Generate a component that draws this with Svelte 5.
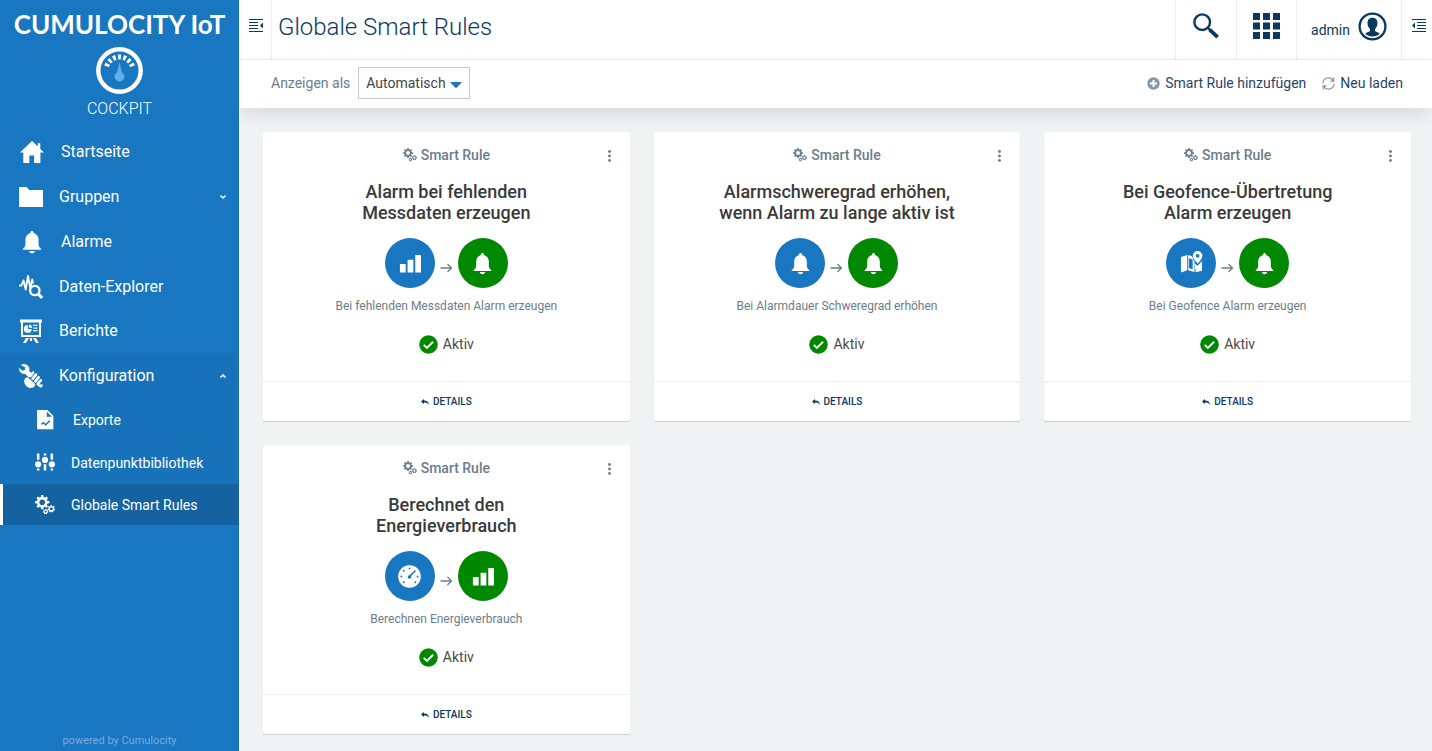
<script>
  const nav = [
    { label: 'Startseite', icon: 'home', large: true },
    { label: 'Gruppen', icon: 'folder', caret: 'down' },
    { label: 'Alarme', icon: 'bell', large: true },
    { label: 'Daten-Explorer', icon: 'explorer' },
    { label: 'Berichte', icon: 'report', compact: true }
  ];

  const subnav = [
    { label: 'Exporte', icon: 'export', large: true },
    { label: 'Datenpunktbibliothek', icon: 'sliders' },
    { label: 'Globale Smart Rules', icon: 'gears', active: true }
  ];

  const rules = [
    { title: ['Alarm bei fehlenden', 'Messdaten erzeugen'], from: 'bars', to: 'bell', text: 'Bei fehlenden Messdaten Alarm erzeugen' },
    { title: ['Alarmschweregrad erhöhen,', 'wenn Alarm zu lange aktiv ist'], from: 'bell', to: 'bell', text: 'Bei Alarmdauer Schweregrad erhöhen' },
    { title: ['Bei Geofence-Übertretung', 'Alarm erzeugen'], from: 'map', to: 'bell', text: 'Bei Geofence Alarm erzeugen' },
    { title: ['Berechnet den', 'Energieverbrauch'], from: 'gauge', to: 'bars', text: 'Berechnen Energieverbrauch' }
  ];

  let view = $state('Automatisch');

  // Outline of a toothed wheel with a round hole.
  function gear(cx, cy, outer, inner, hole, teeth) {
    const step = (Math.PI * 2) / teeth;
    const at = (r, a) => `${(cx + r * Math.cos(a)).toFixed(2)} ${(cy + r * Math.sin(a)).toFixed(2)}`;
    const pts = [];
    for (let i = 0; i < teeth; i++) {
      const a = i * step - Math.PI / 2;
      pts.push(at(inner, a - step * 0.3), at(outer, a - step * 0.2), at(outer, a + step * 0.2), at(inner, a + step * 0.3));
    }
    return `M${pts.join('L')}ZM${cx - hole} ${cy}a${hole} ${hole} 0 1 0 ${hole * 2} 0a${hole} ${hole} 0 1 0 ${-hole * 2} 0Z`;
  }

  const gears = gear(7.2, 7.2, 7.2, 5.4, 2.8, 8) + gear(16.3, 13.8, 3.8, 2.9, 1.5, 7) + gear(10.6, 16.6, 2.7, 2.1, 1, 7);
  const ticks = [-66, -44, -22, 0, 22, 44, 66];
</script>

{#snippet icon(name, size)}
  <svg class="icon" width={size} height={size} viewBox="0 0 24 24" fill="currentColor" aria-hidden="true">
    {#if name === 'home'}
      <path d="M12 1 0 12.6h3.3V23h6v-7.6h4.8V23h6.3V12.6H24L20.3 9V3.2h-2.6v3.2z" />
    {:else if name === 'folder'}
      <path d="M0 2h7.6l2.8 3H24v17H0z" />
    {:else if name === 'bell'}
      <path d="M12 1c.9 0 1.6.7 1.6 1.6v.5c3 .8 5 3.400 5 6.600v4.600c0 2 .8 3 2.600 4.700v.7H2.800V19c1.800-1.700 2.600-2.700 2.600-4.700V9.700c0-3.200 2-5.800 5-6.600v-.5C10.400 1.700 11.100 1 12 1zM9.200 20.900h5.600c-.2 1.400-1.300 2.300-2.800 2.300s-2.600-.9-2.800-2.300z" />
    {:else if name === 'explorer'}
      <path d="M0 10.500h2.400L4.500 5.500l2.200 9L9 1l2.300 12L13.200 4.500l1 4" fill="none" stroke="currentColor" stroke-width="1.900" stroke-linejoin="round" />
      <circle cx="15.800" cy="15.500" r="4.700" fill="none" stroke="currentColor" stroke-width="2.300" />
      <path d="m19.200 18.900 4 4" stroke="currentColor" stroke-width="3" />
    {:else if name === 'report'}
      <path fill-rule="evenodd" d="M1 .5h22v3h-1V18H2V3.500H1zM4 3.500V16h16V3.500z" />
      <path d="M8.800 6v3.900h3.900A3.900 3.900 0 1 1 8.800 6z" />
      <path d="M9.900 5.500a3.600 3.600 0 0 1 3.400 3.300H9.900zM14 5.800h4.500v1.300H14zM14.500 8.400h4v1.300h-4zM14 11h4.500v1.300H14zM7 19h3l-3 5H4zM17 19h-3l3 5h3zM10.900 19h2.200v3h-2.200z" />
    {:else if name === 'wrench'}
      <path d="M1.800 1C4.500-.6 8 0 9.600 2.600c.9 1.400 1 2.900.5 4.300l3 3-3.400 3.600-3.400-3.600c-2.200.4-4.500-.6-5.600-2.700C.1 6.100 0 4.900.3 3.800l3 2.900 2.400-.6.700-2.500z" />
      <path d="M14 8.600 11.400 12M17 10.600 13.700 14.700M19.700 13.200 16.300 17.300M21.800 16.300 19 19.600" fill="none" stroke="currentColor" stroke-width="2.700" stroke-linecap="round" />
      <path d="M20.200 20.200l3.300.3c.8.900-.4 3.200-2 3.300l-4.300-3.300 1.600-1z" />
      <path d="M5.600 15c.8-1.300 2.700-2 4-1l6.500 6c.3 1.400-.7 3-2.300 3.600-1.900.7-4 .5-5.300-.6-2.500-1.900-4-4.800-2.900-8z" />
    {:else if name === 'export'}
      <path fill-rule="evenodd" d="M2.500 0H15l7 7.200V23H2.500zM14.200 2v6h6zM7 16.500l3.200-2.500 2.600 2.500 4.500-4.200 1.200 1.300-5.700 5.300-2.800-2.600-2 1.600z" />
    {:else if name === 'sliders'}
      <path d="M2.300 .5h3v7.500h-3zM2.300 18.500h3v2.500h-3zM10.500 .5h3v2.500h-3zM10.500 13.500h3v7.500h-3zM18.700 .5h3v7.500h-3zM18.700 18.500h3v2.500h-3z" />
      <circle cx="3.800" cy="13.500" r="3.700" /><circle cx="12" cy="8.300" r="3.700" /><circle cx="20.200" cy="13.500" r="3.700" />
    {:else if name === 'gears'}
      <path d={gears} transform="scale(1.200)" fill-rule="evenodd" />
    {:else if name === 'bars'}
      <path d="M2 12.500h6v9H2zM10 8h6v13.500h-6zM18 3h6v18.500h-6z" />
    {:else if name === 'map'}
      <path d="M1 5.300 7.500 3v16L1 21.500zM8.500 3l4.300 1.500c.2 2 1.400 4.200 2.300 5.500v10.800L8.500 19z" fill-opacity="1" />
      <path fill-rule="evenodd" d="M18.400 -1a5 5 0 0 1 5 5c0 3-3.200 6-5 8.300C16.600 10 13.400 7 13.400 4a5 5 0 0 1 5-5zM18.400 2a2 2 0 1 0 0 4 2 2 0 0 0 0-4z" />
      <path d="M15 12l3.400 2.400 4.600-5v10.100L16.500 21z" />
      <path d="M9.200 6.500l4 1.400v10.300l-4-1.400z" class="cut" />
    {:else if name === 'gauge'}
      <circle cx="12" cy="12" r="11.800" />
      <g class="cut">
        <circle cx="12" cy="3.500" r="1" /><circle cx="6" cy="6" r="1" /><circle cx="3.500" cy="12" r="1" /><circle cx="6" cy="18" r="1" />
        <circle cx="18" cy="18" r="1" /><circle cx="20.500" cy="12" r="1" /><circle cx="12" cy="12.500" r="1.900" />
        <path d="m11.200 11.600 6.600-6.400 1 1-6.400 6.600z" />
      </g>
    {/if}
  </svg>
{/snippet}

<div class="app">
  <aside class="sidebar">
    <div class="brand">
      <div class="logo">CUMULOCITY IoT</div>
      <svg class="emblem" width="47" height="47" viewBox="0 0 47 47" aria-hidden="true">
        <circle cx="23.500" cy="23.500" r="21.200" fill="none" stroke="#fff" stroke-width="4.400" />
        {#each ticks as angle}
          <path d="M21.900 7.500h3.200l-.4 5h-2.400z" fill="#fff" transform="rotate({angle} 23.500 23.500)" />
        {/each}
        <path d="M23.500 15l2.300 10.200a4.900 4.900 0 1 1-4.600 0z" fill="#61aeea" />
      </svg>
      <div class="product">COCKPIT</div>
    </div>

    <nav>
      {#each nav as item}
        <a href="#{item.icon}" class="item" class:compact={item.compact}>
          <span class="slot" class:large={item.large}>{@render icon(item.icon, 24)}</span>
          <span>{item.label}</span>
          {#if item.caret}
            <svg class="caret" width="8" height="8" viewBox="0 0 8 8" aria-hidden="true"><path d="m1.500 2.500 2.500 2.500 2.500-2.500" /></svg>
          {/if}
        </a>
      {/each}
      <div class="group">
        <a href="#konfiguration" class="item compact">
          <span class="slot">{@render icon('wrench', 24)}</span>
          <span>Konfiguration</span>
          <svg class="caret" width="8" height="8" viewBox="0 0 8 8" aria-hidden="true"><path d="m1.500 5.500 2.500-2.500 2.500 2.500" /></svg>
        </a>
        {#each subnav as item}
          <a href="#{item.icon}" class="sub" class:active={item.active}>
            <span class="slot" class:large={item.large}>{@render icon(item.icon, 20)}</span>
            <span>{item.label}</span>
          </a>
        {/each}
      </div>
    </nav>

    <div class="powered">powered by Cumulocity</div>
  </aside>

  <div class="main">
    <header class="top">
      <button class="cell toggle" aria-label="Navigator">
        <svg width="14" height="13" viewBox="0 0 14 13" aria-hidden="true">
          <path d="M0 .5h14M0 3.500h9M0 6.500h9M0 9.500h9M0 12.500h14" stroke="currentColor" />
          <path d="M14 3.500v6l-3-3z" fill="currentColor" />
        </svg>
      </button>
      <h1>Globale Smart Rules</h1>
      <button class="cell search" aria-label="Suche">
        <svg width="28" height="28" viewBox="0 0 28 28" fill="none" stroke="currentColor" aria-hidden="true">
          <circle cx="10.200" cy="10.200" r="7.800" stroke-width="2.400" />
          <path d="m15.500 15.500 3 3" stroke-width="2.400" /><path d="m17.600 17.600 8 7.600" stroke-width="3.800" />
        </svg>
      </button>
      <button class="cell apps" aria-label="Anwendungen">
        <svg width="27" height="27" viewBox="0 0 27 27" fill="currentColor" aria-hidden="true">
          {#each [0, 9.5, 19] as y}{#each [0, 10, 20] as x}<rect {x} {y} width="7" height="7" />{/each}{/each}
        </svg>
      </button>
      <button class="cell user">
        <span>admin</span>
        <svg width="29" height="29" viewBox="0 0 29 29" aria-hidden="true">
          <circle cx="14.500" cy="14.500" r="12.900" fill="none" stroke="currentColor" stroke-width="2.300" />
          <path d="M14.500 5.800c3.300 0 5 2.200 5 5.300 0 2.600-1.100 4.500-2.400 5.800v1.800c0 1.300 3.700 1.300 4.600 3.100-1.700 1.700-4.300 2.800-7.200 2.800s-5.500-1.100-7.200-2.800c.9-1.800 4.600-1.800 4.600-3.100v-1.800c-1.300-1.300-2.400-3.200-2.400-5.800 0-3.100 1.700-5.300 5-5.300z" fill="currentColor" />
        </svg>
      </button>
      <button class="cell drawer" aria-label="Seitenleiste">
        <svg width="14" height="13" viewBox="0 0 14 13" aria-hidden="true">
          <path d="M0 .5h14M5 3.500h9M5 6.500h9M5 9.500h9M0 12.500h14" stroke="currentColor" />
          <path d="M3 3.500v6l-3-3z" fill="currentColor" />
        </svg>
      </button>
    </header>

    <div class="toolbar">
      <label for="view">Anzeigen als</label>
      <div class="select">
        <select id="view" bind:value={view}>
          <option>Automatisch</option>
          <option>Liste</option>
        </select>
        <svg width="12" height="6" viewBox="0 0 12 6" aria-hidden="true"><path d="M0 0h12L7 5.400q-1 .9-2 0z" fill="#1776bf" /></svg>
      </div>
      <div class="actions">
        <button>
          <svg width="13" height="13" viewBox="0 0 13 13" aria-hidden="true">
            <circle cx="6.500" cy="6.500" r="6.200" fill="#8399a9" /><path d="M6.500 3v7M3 6.500h7" stroke="#fff" stroke-width="2" />
          </svg>
          Smart Rule hinzufügen
        </button>
        <button>
          <svg width="13" height="13" viewBox="0 0 13 13" fill="none" stroke="#8399a9" stroke-width="1.200" aria-hidden="true">
            <path d="M1 6.300A5.400 5.400 0 0 1 11.200 3.800M12 6.700A5.400 5.400 0 0 1 1.800 9.200M11.800 .6v3.500H8.400M1.200 12.400V8.900h3.400" />
          </svg>
          Neu laden
        </button>
      </div>
    </div>

    <main class="grid">
      {#each rules as rule}
        <article class="card">
          <div class="kind">
            {@render icon('gears', 14)}
            <span>Smart Rule</span>
            <button class="more" aria-label="Menü">
              <svg width="3" height="12" viewBox="0 0 3 12" fill="currentColor" aria-hidden="true"><circle cx="1.500" cy="1.500" r="1.400" /><circle cx="1.500" cy="6" r="1.400" /><circle cx="1.500" cy="10.500" r="1.400" /></svg>
            </button>
          </div>
          <h2>{rule.title[0]}<br />{rule.title[1]}</h2>
          <div class="flow">
            <span class="disc source">{@render icon(rule.from, 23)}</span>
            <svg class="arrow" width="13" height="10" viewBox="0 0 13 10" fill="none" stroke="currentColor" stroke-width="1.300" aria-hidden="true"><path d="M0.500 5h11M7.500 1l4 4-4 4" /></svg>
            <span class="disc target">{@render icon(rule.to, 23)}</span>
          </div>
          <p>{rule.text}</p>
          <div class="status">
            <svg width="19" height="19" viewBox="0 0 19 19" aria-hidden="true">
              <circle cx="9.500" cy="9.500" r="9.300" fill="#080" /><path d="m4.800 9.900 3.100 3 6.200-6.200" fill="none" stroke="#fff" stroke-width="2" />
            </svg>
            Aktiv
          </div>
          <a class="details" href="#details">
            <svg width="8" height="6" viewBox="0 0 8 6" fill="currentColor" aria-hidden="true"><path d="M0 2.400 3 0v1.400c3 0 4.800 1.400 5 4.600C7 4 5.500 3.500 3 3.500v1.400z" /></svg>
            DETAILS
          </a>
        </article>
      {/each}
    </main>
  </div>
</div>

<style>
  :global(body) {
    margin: 0;
    background: #f1f2f4;
  }
  .app {
    display: flex;
    min-height: 100vh;
    font: 14px/20px Roboto, sans-serif;
    color: #4a4a4a;
  }
  .app * {
    box-sizing: border-box;
  }
  svg {
    display: block;
    flex: none;
    overflow: visible;
  }
  button {
    border: 0;
    padding: 0;
    background: none;
    font: inherit;
    color: inherit;
    cursor: pointer;
  }
  a {
    color: inherit;
    text-decoration: none;
  }

  .sidebar {
    position: relative;
    z-index: 1;
    display: flex;
    flex: none;
    flex-direction: column;
    width: 239px;
    background: #1976c1;
    color: #fff;
  }
  .brand {
    display: flex;
    flex-direction: column;
    align-items: center;
    height: 129px;
    padding-top: 8px;
  }
  .logo {
    font: 700 26px/32px Lato, sans-serif;
    white-space: nowrap;
  }
  .emblem {
    margin-top: 7px;
  }
  .product {
    margin-top: 5px;
    font-size: 16px;
    font-weight: 300;
  }
  .item,
  .sub {
    display: flex;
    align-items: center;
    height: 45px;
    padding: 0 12px 0 19px;
    font-size: 16px;
  }
  .item.compact {
    height: 44px;
  }
  .slot {
    display: flex;
    width: 40px;
  }
  .slot.large {
    width: 42px;
  }
  .item .slot.large {
    padding-left: 1px;
  }
  .caret {
    margin-left: auto;
    fill: none;
    stroke: #fff;
    stroke-width: 1.5;
  }
  .group {
    background: #1872b9;
    border-top: 1px solid #176eb3;
  }
  .sub {
    height: 43px;
    padding-left: 35px;
    font-size: 14px;
  }
  .sub .slot {
    width: 36px;
  }
  .sub .slot.large {
    width: 38px;
  }
  .sub.active {
    height: 41px;
    padding-left: 32px;
    border-left: 3px solid #fff;
    background: #1562a0;
  }
  .powered {
    margin-top: auto;
    text-align: center;
    font-size: 11px;
    color: #75ade0;
  }

  .main {
    display: flex;
    flex: 1;
    flex-direction: column;
    min-width: 0;
  }
  .top {
    display: flex;
    height: 60px;
    background: #fff;
    border-bottom: 1px solid #ebedee;
    color: #0b385f;
  }
  h1 {
    flex: 1;
    margin: 0;
    padding-left: 6px;
    font-size: 24px;
    font-weight: 300;
    line-height: 54px;
  }
  .cell {
    display: flex;
    align-items: flex-start;
    justify-content: center;
    border-left: 1px solid #ebedee;
  }
  .toggle {
    width: 33px;
    padding: 19px 0 0 2px;
    border-left: 0;
    border-right: 1px solid #ebedee;
  }
  .search {
    width: 61px;
    padding-top: 12px;
  }
  .apps {
    width: 60px;
    padding-top: 13px;
  }
  .user {
    gap: 8px;
    width: 105px;
    padding-top: 12px;
  }
  .user span {
    padding-top: 8px;
  }
  .drawer {
    width: 31px;
    padding: 19px 0 0 3px;
  }
  .toolbar {
    position: relative;
    display: flex;
    align-items: center;
    height: 48px;
    padding: 0 29px 2px 32px;
    background: #fff;
    box-shadow: 0 8px 20px -4px rgba(40, 50, 60, 0.16);
    color: #6b7d8a;
  }
  .select {
    position: relative;
    margin-left: 8px;
  }
  select {
    width: 112px;
    height: 32px;
    padding: 0 24px 0 7px;
    appearance: none;
    border: 1px solid #c4ccd2;
    border-radius: 0;
    background: #fff;
    font: inherit;
    color: #444;
  }
  .select svg {
    position: absolute;
    top: 15px;
    right: 8px;
    pointer-events: none;
  }
  .actions {
    display: flex;
    gap: 16px;
    margin-left: auto;
    color: #1f4768;
  }
  .actions button {
    display: flex;
    align-items: center;
    gap: 5px;
  }

  .grid {
    display: grid;
    grid-template-columns: repeat(auto-fill, minmax(320px, 1fr));
    gap: 24px;
    padding: 24px 21px 16px 24px;
  }
  .card {
    display: flex;
    flex-direction: column;
    align-items: center;
    background: #fff;
    border-radius: 2px;
    box-shadow: 0 1px 1px rgba(0, 0, 0, 0.14);
    text-align: center;
  }
  .kind {
    position: relative;
    display: flex;
    align-items: center;
    justify-content: center;
    gap: 4px;
    width: 100%;
    padding: 13px 0;
    font-weight: 500;
    color: #6b7d8a;
  }
  .more {
    position: absolute;
    top: 18px;
    right: 19px;
  }
  h2 {
    margin: 3px 0 0;
    font-size: 18px;
    font-weight: 500;
    line-height: 21px;
    color: #3a3a3a;
  }
  .flow {
    display: flex;
    align-items: center;
    gap: 5px;
    margin-top: 15px;
    color: #6b7d8a;
  }
  .arrow {
    margin-top: 10px;
  }
  .disc {
    display: grid;
    place-items: center;
    width: 50px;
    height: 50px;
    border-radius: 50%;
    color: #fff;
  }
  .source {
    background: #1976c1;
  }
  .cut {
    fill: #1976c1;
  }
  .target {
    background: #080;
  }
  p {
    margin: 8px 0 0;
    font-size: 12px;
    color: #6b7d8a;
  }
  .status {
    display: flex;
    align-items: center;
    gap: 5px;
    margin: 18px 0 27px;
  }
  .details {
    display: flex;
    align-items: center;
    justify-content: center;
    gap: 4px;
    width: 100%;
    height: 40px;
    border-top: 1px solid #ebedee;
    font-size: 10px;
    font-weight: 500;
    color: #0b385f;
  }
</style>
